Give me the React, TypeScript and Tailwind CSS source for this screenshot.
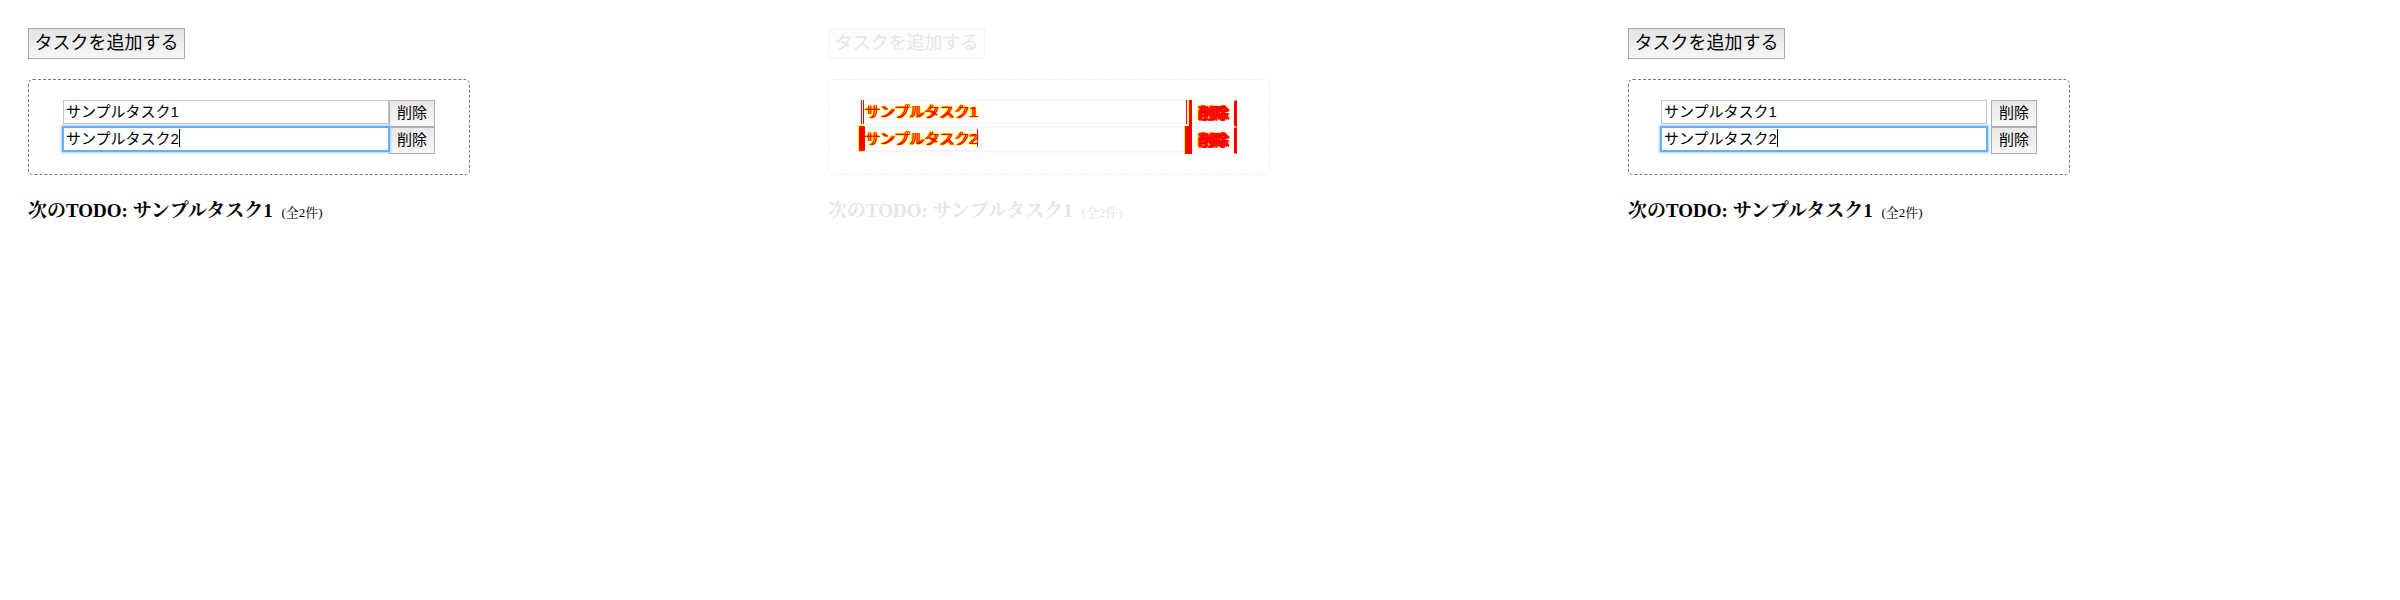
import React from "react";

type Variant = "plain" | "diff" | "spaced";

const tasks = ["サンプルタスク1", "サンプルタスク2"];

const buttonBase =
  "shrink-0 border bg-linear-to-b whitespace-nowrap text-center";

const sans = "font-['Liberation_Sans','Noto_Sans_CJK_JP',sans-serif]";

const redInputText =
  "text-[#ff0000] [text-shadow:2px_0_#ff0000,-1px_0_#ffff00,3px_0_#ffff00,1px_-1px_#ffff00,1px_1px_#ffff00]";

const redButtonText =
  "text-[#ff0000] [text-shadow:1px_0_#ff0000,-1px_0_#ff0000,2px_0_#ff0000,0_1px_#ff0000,2px_1px_#ff0000,0_-1px_#ffff00,-2px_0_#ffff00,3px_0_#ffff00]";

function DiffEdges({ focused }: { focused: boolean }) {
  return focused ? (
    <>
      <span aria-hidden="true" className="absolute -top-0.5 -left-[3px] h-[27px] w-[7px] rounded-xs border border-r-0 border-[#ffff00] bg-[#ff0000]" />
      <span aria-hidden="true" className="absolute -top-px -right-[5px] h-7 w-2 border-l border-[#ffff00] bg-[#ff0000]" />
    </>
  ) : (
    <>
      <span aria-hidden="true" className="absolute top-0 left-0 h-6 w-[3px] border-x border-[#ff0000] bg-white" />
      <span aria-hidden="true" className="absolute top-0 -right-0.5 h-6 w-[3px] border-r border-l border-r-[#ffff00] border-l-[#ff0000] bg-white" />
      <span aria-hidden="true" className="absolute top-0 -right-[5px] h-[26px] w-[3px] bg-[#ff0000]" />
    </>
  );
}

function TaskRow({ value, focused, variant }: { value: string; focused: boolean; variant: Variant }) {
  const diff = variant === "diff";
  const input = diff
    ? `border-[#f5f5f5] ${redInputText} ${focused ? "shadow-[0_0_2px_1px_#f0f0f0]" : ""}`
    : focused
      ? "border-[#6aaef5] text-black shadow-[0_0_0_1px_#6aaef5,0_0_2px_2px_#a5cff9]"
      : "border-[#c4c4c4] text-black";
  const button = diff
    ? `border-[#f7f7f7] border-r-3 border-r-[#ff0000] from-[#fdfdfd] to-white ${redButtonText}`
    : "border-[#adadad] from-[#e9e9e9] to-[#f7f7f7] text-black";
  return (
    <li className={`flex items-start justify-center ${variant === "plain" ? "" : "gap-1"}`}>
      <div className={`relative flex w-[326px] ${focused && !diff ? "z-10" : ""}`}>
        <input
          aria-label="タスク"
          defaultValue={value}
          className={`h-6 w-full border bg-white px-0.5 pb-1 text-[15px] leading-5 outline-none ${input}`}
        />
        {focused && (
          <span
            aria-hidden="true"
            className={`absolute top-0.5 left-[116px] h-[18px] w-px ${diff ? "bg-[#ff0000]" : "bg-black"}`}
          />
        )}
        {diff && <DiffEdges focused={focused} />}
      </div>
      <button type="button" className={`${buttonBase} h-[27px] w-[46px] pb-0.5 text-[15px] leading-5 ${button}`}>
        削除
      </button>
    </li>
  );
}

function TodoPanel({ variant }: { variant: Variant }) {
  const diff = variant === "diff";
  return (
    <section className="min-w-0 px-7 pt-7">
      <button
        type="button"
        className={`${buttonBase} block h-[31px] min-w-[157px] px-1 pb-0.5 text-[18px] leading-6 ${
          diff
            ? "border-[#f5f5f5] from-[#fcfcfc] to-[#fefefe] text-[#e5e5e5]"
            : "border-[#a9a9a9] from-[#e3e3e3] to-[#f7f7f7] text-black"
        }`}
      >
        タスクを追加する
      </button>
      <ul
        className={`mt-5 w-full max-w-[442px] rounded-[5px] border border-dashed py-5 ${
          diff ? "border-[#f0f0f0]" : "border-[#777777]"
        }`}
      >
        {tasks.map((task, index) => (
          <TaskRow key={task} value={task} focused={index === 1} variant={variant} />
        ))}
      </ul>
      <h2
        className={`mt-[22px] font-['Liberation_Serif','Noto_Serif_CJK_JP','Noto_Sans_CJK_JP',serif] text-[19px] leading-7 font-bold ${
          diff ? "text-[#e5e5e5]" : "text-black"
        }`}
      >
        次のTODO: サンプルタスク1 <small className="ml-1 text-[13px] font-normal">(全2件)</small>
      </h2>
    </section>
  );
}

export default function App() {
  return (
    <main lang="ja" className={`grid min-h-screen grid-cols-3 bg-white ${sans}`}>
      <TodoPanel variant="plain" />
      <TodoPanel variant="diff" />
      <TodoPanel variant="spaced" />
    </main>
  );
}
